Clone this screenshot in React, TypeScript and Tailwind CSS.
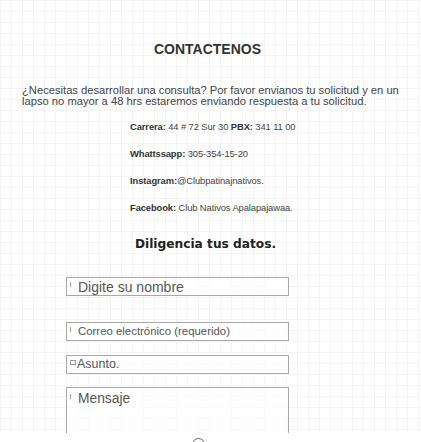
import React from "react";

const contactLines = [
  { label: "Carrera:", value: " 44 # 72 Sur 30 ", label2: "PBX:", value2: " 341 11 00" },
  { label: "Whattssapp:", value: " 305-354-15-20" },
  { label: "Instagram:", value: "@Clubpatinajnativos." },
  { label: "Facebook:", value: " Club Nativos Apalapajawaa." },
];

function Field({
  placeholder,
  size,
  marker = "bar",
}: {
  placeholder: string;
  size: string;
  marker?: "bar" | "box";
}) {
  return (
    <div className="flex h-[19px] w-[223px] items-center border border-[#a9a9a9] bg-white/60 pl-[3px]">
      {marker === "bar" ? (
        <span className="mr-[7px] mb-[5px] h-[5px] w-px bg-[#9a9a9a]" />
      ) : (
        <span className="mr-[1px] mb-[5px] h-[5px] w-[6px] border border-[#9a9a9a]" />
      )}
      <span className={`${size} leading-none text-[#555]`}>{placeholder}</span>
    </div>
  );
}

export default function App() {
  return (
    <div className="flex h-[442px] w-full flex-col overflow-hidden bg-white font-['Liberation_Sans',Arial,sans-serif]">
      <div className="flex flex-1 flex-col bg-[linear-gradient(to_right,#f4f4f4_1px,transparent_1px),linear-gradient(to_bottom,#f4f4f4_1px,transparent_1px)] bg-[size:11px_11px]">
        {/* Heading */}
        <h1 className="mt-[41px] pr-[6px] text-center text-[14px] leading-[16px] font-bold text-[#333]">
          CONTACTENOS
        </h1>

        <p className="mt-[28px] pl-[22px] text-[11.2px] leading-[11px] text-[#444]">
          ¿Necesitas desarrollar una consulta? Por favor envianos tu solicitud y en un
          <br />
          lapso no mayor a 48 hrs estaremos enviando respuesta a tu solicitud.
        </p>

        {/* Contact info */}
        <div className="mt-[15px] flex flex-col gap-[17px] pl-[130px] text-[9.4px] leading-[10px] tracking-[-0.1px] text-[#444]">
          {contactLines.map((line) => (
            <p key={line.label}>
              <span className="font-bold text-[#333]">{line.label}</span>
              {line.value}
              {line.label2 && <span className="font-bold text-[#333]">{line.label2}</span>}
              {line.value2}
            </p>
          ))}
        </div>

        <h2 className="mt-[24px] pr-[10px] text-center font-['DejaVu_Sans',sans-serif] text-[12.2px] leading-[15px] font-bold text-[#222]">
          Diligencia tus datos.
        </h2>

        {/* Form */}
        <div className="mt-[25px] flex flex-col pl-[66px]">
          <Field placeholder="Digite su nombre" size="text-[14px]" />
          <div className="mt-[26px]">
            <Field placeholder="Correo electrónico (requerido)" size="text-[11.4px]" />
          </div>
          <div className="mt-[14px]">
            <Field placeholder="Asunto." size="text-[12.5px]" marker="box" />
          </div>
          <div className="mt-[13px] flex h-[46px] w-[223px] border border-b-0 border-[#a9a9a9] bg-white/60 pt-[4px] pl-[3px]">
            <span className="mt-[2px] mr-[7px] h-[5px] w-px bg-[#9a9a9a]" />
            <span className="text-[13.8px] leading-none text-[#555]">Mensaje</span>
          </div>
        </div>
      </div>

      {/* Bottom strip */}
      <div className="flex h-[11px] shrink-0 justify-center bg-white pr-[24px]">
        <span className="mt-[5px] h-[13px] w-[13px] rounded-full border border-[#666]" />
      </div>
    </div>
  );
}
